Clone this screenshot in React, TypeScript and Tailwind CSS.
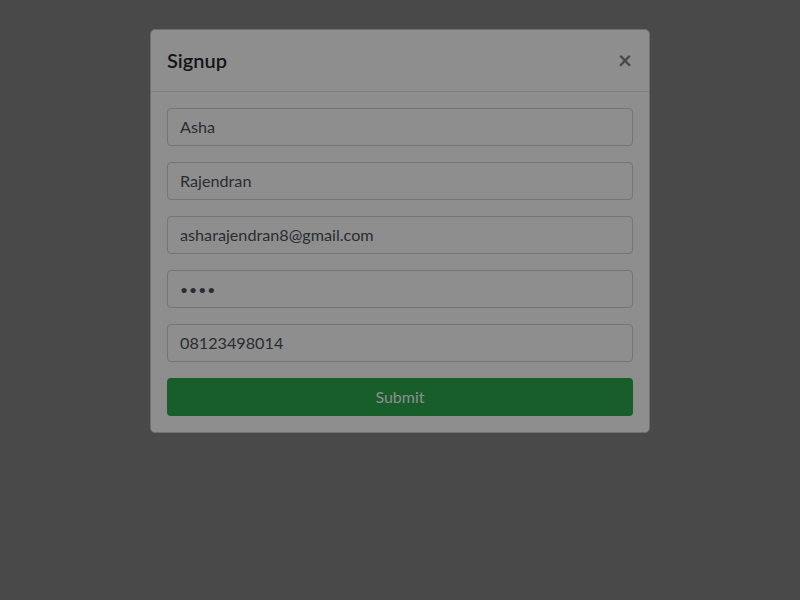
export default function App() {
  const fields = ["Asha", "Rajendran", "asharajendran8@gmail.com", "••••", "08123498014"];
  return (
    <div className="w-[800px] h-[600px] bg-[#494949] flex justify-center" style={{ fontFamily: 'Lato, sans-serif' }}>
      <div className="mt-[29px] w-[500px] h-fit bg-[#8e8e8e] border border-[#6f6f6f] rounded-[5px] flex flex-col">
        <div className="h-[62px] px-4 flex items-center justify-between border-b border-[#7c7e80]">
          <span className="text-[20px] font-semibold text-[#131517] leading-none -mt-[1px]">Signup</span>
          <span className="text-[24px] font-bold text-[#484848] leading-none -mt-[2px] mr-[1px]">×</span>
        </div>
        <div className="p-4 flex flex-col gap-4">
          {fields.map((f, i) => (
            <div key={i} className="h-[38px] border border-[#737679] rounded-[4px] px-3 pt-[1px] flex items-center text-[16.2px] text-[#292d30]">
              {f === "••••" ? <span className="tracking-[1px] text-[14px]">{f}</span> : f}
            </div>
          ))}
          <div className="h-[38px] bg-[#185e2a] rounded-[4px] flex items-center justify-center text-[16px] text-[#8e8e8e]">Submit</div>
        </div>
      </div>
    </div>
  );
}
